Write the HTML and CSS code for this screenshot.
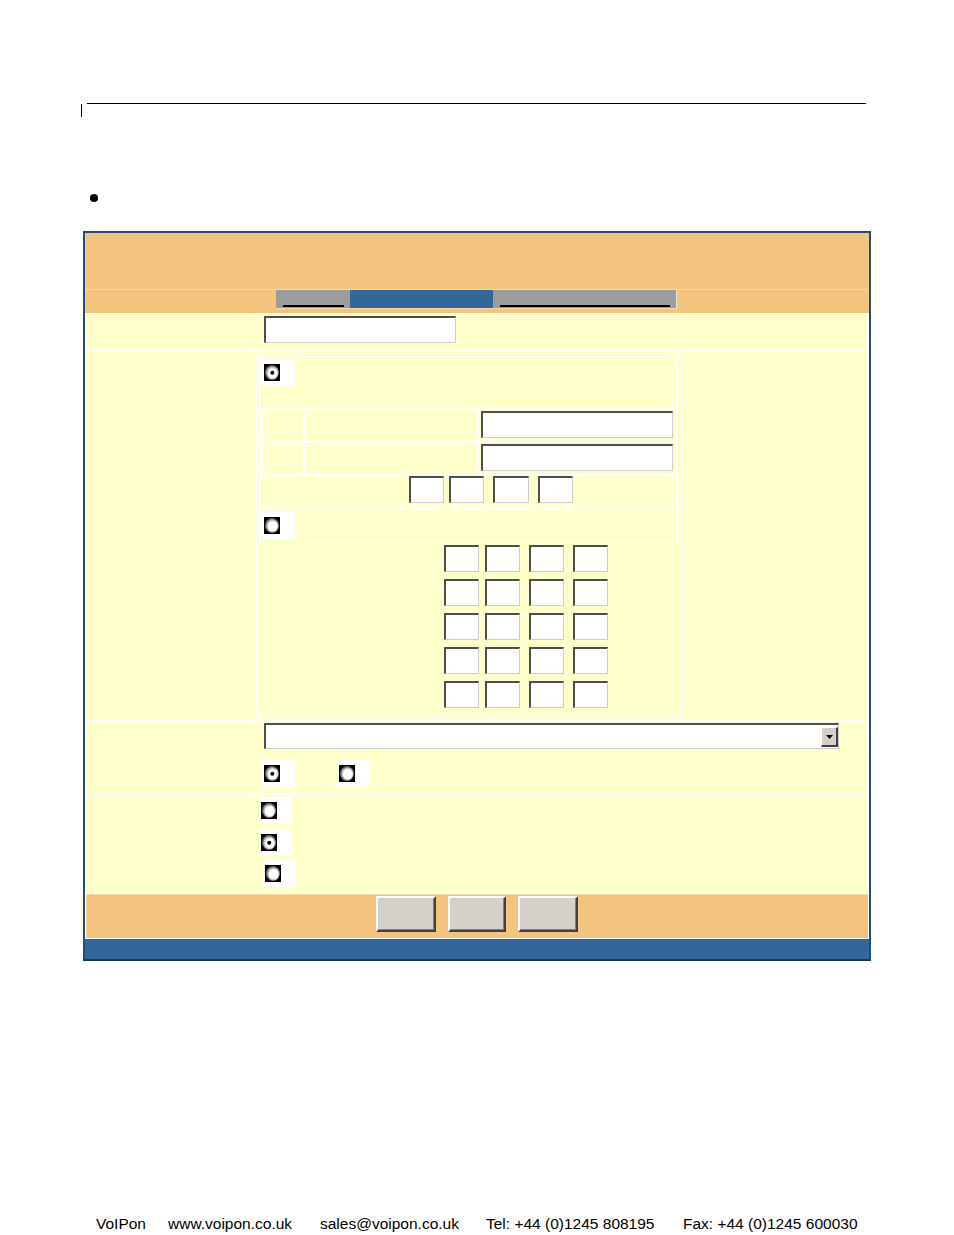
FILE: index.html
```html
<!DOCTYPE html>
<html>
<head>
<meta charset="utf-8">
<title>VoIPon</title>
<link rel="stylesheet" href="styles.css">
</head>
<body>
<div class="page">
  <div class="rule"></div>
  <div class="tick"></div>
  <div class="bullet"></div>

  <div class="panel">
    <div class="header"></div>
    <div class="tabbar">
      <div class="tab tab-gray tab-1"><span class="tab-line"></span></div>
      <div class="tab tab-blue tab-2"></div>
      <div class="tab tab-gray tab-3"><span class="tab-line"></span></div>
    </div>

    <div class="grid">
      <!-- row 1 -->
      <div class="lbl"></div>
      <div class="val v1"><div class="inp wide"></div></div>

      <!-- row 2 -->
      <div class="lbl"></div>
      <div class="val v2">
        <div class="box-a">
          <div class="box-b">
            <div class="cell radio-row">
              <div class="rbox">
                <svg class="rd" width="16" height="17" viewBox="0 0 16 17"><rect width="16" height="17" fill="#000"/><ellipse cx="8" cy="8.5" rx="7" ry="7.5" fill="#6a6a6a"/><ellipse cx="8.4" cy="8.9" rx="6" ry="6.4" fill="#c4c4c4"/><ellipse cx="8.7" cy="9.1" rx="4.8" ry="5.2" fill="#fff"/><circle cx="8.3" cy="8.8" r="2" fill="#000"/></svg>
              </div>
            </div>
            <div class="subgrid">
              <div class="cell"></div>
              <div class="cell"></div>
              <div class="cell sub-inp"><div class="inp field"></div></div>
              <div class="cell"></div>
              <div class="cell"></div>
              <div class="cell sub-inp"><div class="inp field"></div></div>
            </div>
            <div class="cell ip-row">
              <div class="inp sq"></div>
              <div class="inp sq g5"></div>
              <div class="inp sq w36"></div>
              <div class="inp sq"></div>
            </div>
            <div class="cell radio-row2">
              <div class="rbox">
                <svg class="rd" width="16" height="17" viewBox="0 0 16 17"><rect width="16" height="17" fill="#000"/><ellipse cx="8" cy="8.5" rx="7" ry="7.5" fill="#6a6a6a"/><ellipse cx="8.4" cy="8.9" rx="6" ry="6.4" fill="#c4c4c4"/><ellipse cx="8.7" cy="9.1" rx="4.8" ry="5.2" fill="#fff"/></svg>
              </div>
            </div>
          </div>
          <div class="lrow"><div class="inp sq"></div><div class="inp sq g6"></div><div class="inp sq"></div><div class="inp sq"></div></div>
          <div class="lrow"><div class="inp sq"></div><div class="inp sq g6"></div><div class="inp sq"></div><div class="inp sq"></div></div>
          <div class="lrow"><div class="inp sq"></div><div class="inp sq g6"></div><div class="inp sq"></div><div class="inp sq"></div></div>
          <div class="lrow"><div class="inp sq"></div><div class="inp sq g6"></div><div class="inp sq"></div><div class="inp sq"></div></div>
          <div class="lrow"><div class="inp sq"></div><div class="inp sq g6"></div><div class="inp sq"></div><div class="inp sq"></div></div>
        </div>
      </div>

      <!-- row 3a -->
      <div class="lbl"></div>
      <div class="val v3">
        <div class="select"><span class="arrow"><svg width="7" height="4" viewBox="0 0 7 4"><path d="M0 0H7L3.5 4Z" fill="#000"/></svg></span></div>
      </div>

      <!-- row 3b -->
      <div class="lbl"></div>
      <div class="val v3b">
        <div class="rbox">
          <svg class="rd" width="16" height="17" viewBox="0 0 16 17"><rect width="16" height="17" fill="#000"/><ellipse cx="8" cy="8.5" rx="7" ry="7.5" fill="#6a6a6a"/><ellipse cx="8.4" cy="8.9" rx="6" ry="6.4" fill="#c4c4c4"/><ellipse cx="8.7" cy="9.1" rx="4.8" ry="5.2" fill="#fff"/><circle cx="8.3" cy="8.8" r="2" fill="#000"/></svg>
        </div>
        <div class="rbox r-far">
          <svg class="rd" width="16" height="17" viewBox="0 0 16 17"><rect width="16" height="17" fill="#000"/><ellipse cx="8" cy="8.5" rx="7" ry="7.5" fill="#6a6a6a"/><ellipse cx="8.4" cy="8.9" rx="6" ry="6.4" fill="#c4c4c4"/><ellipse cx="8.7" cy="9.1" rx="4.8" ry="5.2" fill="#fff"/></svg>
        </div>
      </div>

      <!-- row 4 -->
      <div class="lbl"></div>
      <div class="val v4">
        <div class="rbox">
          <svg class="rd" width="16" height="17" viewBox="0 0 16 17"><rect width="16" height="17" fill="#000"/><ellipse cx="8" cy="8.5" rx="7" ry="7.5" fill="#6a6a6a"/><ellipse cx="8.4" cy="8.9" rx="6" ry="6.4" fill="#c4c4c4"/><ellipse cx="8.7" cy="9.1" rx="4.8" ry="5.2" fill="#fff"/></svg>
        </div>
        <div class="rbox r-g5">
          <svg class="rd" width="16" height="17" viewBox="0 0 16 17"><rect width="16" height="17" fill="#000"/><ellipse cx="8" cy="8.5" rx="7" ry="7.5" fill="#6a6a6a"/><ellipse cx="8.4" cy="8.9" rx="6" ry="6.4" fill="#c4c4c4"/><ellipse cx="8.7" cy="9.1" rx="4.8" ry="5.2" fill="#fff"/><circle cx="8.3" cy="8.8" r="2" fill="#000"/></svg>
        </div>
        <div class="rbox r-g4">
          <svg class="rd" width="16" height="17" viewBox="0 0 16 17"><rect width="16" height="17" fill="#000"/><ellipse cx="8" cy="8.5" rx="7" ry="7.5" fill="#6a6a6a"/><ellipse cx="8.4" cy="8.9" rx="6" ry="6.4" fill="#c4c4c4"/><ellipse cx="8.7" cy="9.1" rx="4.8" ry="5.2" fill="#fff"/></svg>
        </div>
      </div>

      <!-- buttons -->
      <div class="btnrow">
        <div class="btn b60"></div>
        <div class="btn b58"></div>
        <div class="btn b60"></div>
      </div>
    </div>

    <div class="bluebar"></div>
  </div>

  <div class="footer">
    <span>VoIPon</span>
    <span>www.voipon.co.uk</span>
    <span>sales@voipon.co.uk</span>
    <span>Tel: +44 (0)1245 808195</span>
    <span>Fax: +44 (0)1245 600030</span>
  </div>
</div>
</body>
</html>
```

FILE: styles.css
```css
* { box-sizing: border-box; }

body {
  margin: 0;
  background: #fff;
  font-family: "Liberation Sans", Arial, sans-serif;
  color: #000;
}

.page {
  width: 954px;
  padding-top: 103px;
}

.rule {
  margin-left: 87px;
  width: 779px;
  height: 1px;
  background: #000;
}

.tick {
  margin-left: 81px;
  width: 1px;
  height: 13px;
  background: #000;
}

.bullet {
  margin: 77px 0 0 90px;
  width: 8px;
  height: 8px;
  border-radius: 50%;
  background: #000;
}

.panel {
  margin: 29px 0 0 83px;
  width: 788px;
  border: 2px solid #234c79;
  border-bottom-color: #1a3552;
  background: #fff;
}

.header {
  height: 56px;
  background: #f3c47d;
  border-left: 1px solid #f6d197;
}

.tabbar {
  height: 24px;
  background: #f3c47d;
  border-top: 1px solid #f8d6a2;
  padding-left: 191px;
  display: flex;
  align-items: flex-start;
}

.tab {
  height: 19px;
  display: flex;
  align-items: flex-end;
  padding: 0 6px 1px 7px;
  border-bottom: 1px solid #f8d8a6;
}

.tab-gray { background: #9c9c9c; }
.tab-blue { background: #336699; }
.tab-1 { width: 74px; }
.tab-2 { width: 143px; }
.tab-3 { width: 184px; border-right: 1px solid #e2e2e2; }

.tab-line {
  flex: 1;
  height: 2px;
  background: #000;
}

.grid {
  display: grid;
  grid-template-columns: 167px 1fr;
  grid-template-rows: 36px 369px 36px 36px 98px 44px;
  gap: 1px;
  padding: 1px;
  background: #fff;
}

.lbl, .val, .cell {
  background: #ffffcc;
}

.inp {
  background: #fff;
  border-style: solid;
  border-width: 2px 1px 1px 2px;
  border-color: #4e4e4e #cdcdcd #cdcdcd #4e4e4e;
}

.wide { width: 192px; height: 27px; }
.field { width: 192px; height: 27px; }
.sq { width: 35px; height: 27px; }
.sq + .sq { margin-left: 9px; }
.sq.g5 { margin-left: 5px; }
.sq.g6 { margin-left: 6px; }
.sq.w36 { width: 36px; }

.v1 { padding: 2px 0 0 10px; }

.v2 { padding: 2px 0 0 2px; }

.box-a {
  width: 427px;
  border: 1px solid #fff;
  padding: 2px;
}

.box-b {
  width: 419px;
  border: 1px solid #fff;
  padding: 0 1px;
  background: #fff;
  display: flex;
  flex-direction: column;
  gap: 2px;
}

.radio-row { height: 51px; padding: 2px 0 0 1px; }
.radio-row2 { height: 33px; padding: 2px 0 0 1px; }

.subgrid {
  display: grid;
  grid-template-columns: 40px 172px 196px;
  grid-template-rows: 31px 31px;
  gap: 2px;
  padding: 0 2px;
  background: #fff;
}

.sub-inp { padding: 1px 2px; }

.ip-row {
  height: 32px;
  display: flex;
  align-items: flex-start;
  padding-left: 148px;
}

.lrow {
  height: 34px;
  display: flex;
  align-items: flex-start;
  padding: 1px 0 0 185px;
  background: linear-gradient(to right, #ffffcc 176px, #ffffd6 176px, #ffffd6 177px, #ffffcc 177px);
}

.rbox {
  width: 33px;
  height: 27px;
  background: #fff;
  padding: 5px 0 0 2px;
}

.rd { display: block; }

.v3 { padding: 2px 0 0 10px; }

.select {
  width: 575px;
  height: 26px;
  background: #fff;
  border-style: solid;
  border-width: 2px 1px 1px 2px;
  border-color: #4e4e4e #cdcdcd #cdcdcd #4e4e4e;
  display: flex;
  justify-content: flex-end;
  align-items: flex-start;
  padding: 2px 0 0;
}

.arrow {
  width: 17px;
  height: 20px;
  background: #d4d0c8;
  border-style: solid;
  border-width: 1px 2px 2px 1px;
  border-color: #fff #404040 #404040 #fff;
  display: flex;
  align-items: center;
  justify-content: center;
  padding-top: 1px;
}

.arrow svg { display: block; }

.v3b {
  display: flex;
  align-items: flex-start;
  padding: 2px 0 0 8px;
}

.r-far { margin-left: 42px; }

.v4 {
  display: flex;
  flex-direction: column;
  align-items: flex-start;
  padding: 2px 0 0 5px;
}

.r-g5 { margin-top: 5px; }
.r-g4 { margin-top: 4px; margin-left: 4px; }

.btnrow {
  grid-column: 1 / -1;
  background: #f3c47d;
  border-top: 1px solid #f8d8a6;
  border-left: 1px solid #f8d8a6;
  display: flex;
  align-items: flex-start;
  gap: 12px;
  padding: 1px 0 0 289px;
}

.btn {
  height: 36px;
  background: #d4d0c8;
  border-style: solid;
  border-width: 2px;
  border-color: #fff #404040 #404040 #fff;
  box-shadow: inset -1px -1px 0 #808080;
}

.b60 { width: 60px; }
.b58 { width: 58px; }

.bluebar {
  height: 20px;
  background: #336699;
}

.footer {
  margin: 254px 0 0 96px;
  display: grid;
  grid-template-columns: 72px 152px 166px 197px auto;
  font-size: 15.5px;
  line-height: 18px;
  white-space: nowrap;
}
```
